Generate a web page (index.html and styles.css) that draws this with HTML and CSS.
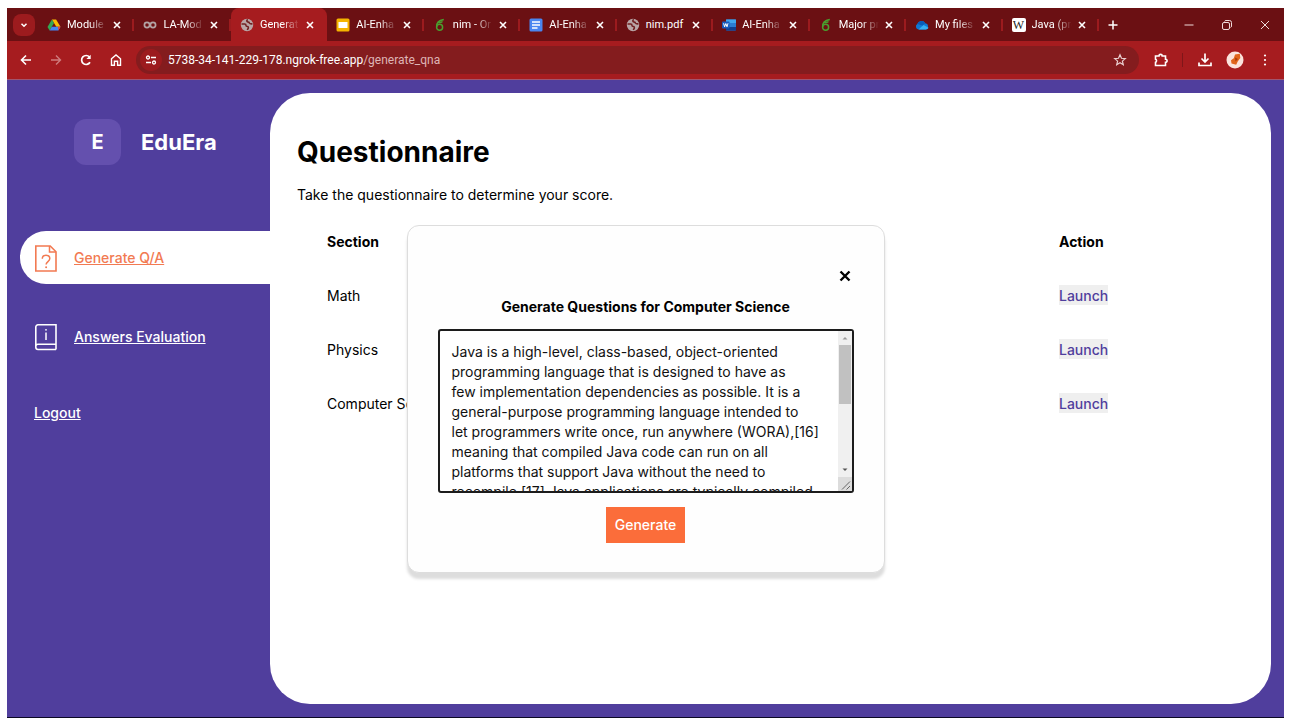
FILE: index.html
```html
<!DOCTYPE html>
<html lang="en">
<head>
<meta charset="utf-8">
<meta name="viewport" content="width=device-width, initial-scale=1">
<title>EduEra – Questionnaire</title>
<link rel="stylesheet" href="styles.css">
</head>
<body>
<svg class="sprite" aria-hidden="true">
  <symbol id="x" viewBox="0 0 10 10"><path d="M2 2l6 6M8 2l-6 6" stroke="currentColor" stroke-width="1.6" fill="none"/></symbol>
  <symbol id="globe" viewBox="0 0 14 14"><circle cx="7" cy="7" r="6.2" fill="#b9a5a6"/><path d="M1.500 6h3.200c1 0 1.300.8 1.300 1.500s.8 1 1.500 1 1 .8.800 1.600L7.300 12M7.800 1.500c-1 .6-1.300 1.500-.6 2.200.7.600 2 .3 2.300 1.300.3.900 1.500 1 3 .8" fill="none" stroke="#702022" stroke-width="1.600"/></symbol>
  <symbol id="overleaf" viewBox="0 0 14 14"><circle cx="6.600" cy="9.300" r="3" fill="none" stroke="#49a02f" stroke-width="1.500"/><path d="M3.600 9C3.300 5.500 5 2.500 10.800 1.500M5.500 4.600c1.800.2 3-.2 4-1.200" fill="none" stroke="#49a02f" stroke-width="1.400"/></symbol>
</svg>
<div class="browser">
  <header class="tabbar">
    <button class="tabsearch" aria-label="Search tabs"><svg viewBox="0 0 10 10" width="10" height="10"><path d="M2.500 3.800L5 6.300l2.500-2.500" stroke="#fff" stroke-width="1.500" fill="none"/></svg></button>
    <nav class="tabs" aria-label="Tabs">
      <div class="tab"><svg class="fav" viewBox="0 0 14 14"><path d="M4.900 1.500h4.200l4.400 7.300H9.300z" fill="#fbbc04"/><path d="M4.900 1.500L.5 8.900l2.100 3.600L7 5z" fill="#34a853"/><path d="M4.800 8.800h8.700l-2.100 3.700H2.600z" fill="#4285f4"/><path d="M11 8.800h2.500l-2.100 3.700z" fill="#ea4335"/></svg><span class="tabname">Module</span><button class="close" aria-label="Close tab"><svg><use href="#x"/></svg></button></div>
      <div class="tab before"><svg class="fav" viewBox="0 0 14 14"><circle cx="4" cy="7" r="2.600" fill="none" stroke="#b3a3a4" stroke-width="1.700"/><circle cx="10" cy="7" r="2.600" fill="none" stroke="#b3a3a4" stroke-width="1.700"/></svg><span class="tabname">LA-Mod</span><button class="close" aria-label="Close tab"><svg><use href="#x"/></svg></button></div>
      <div class="tab active"><svg class="fav"><use href="#globe"/></svg><span class="tabname">Generat</span><button class="close" aria-label="Close tab"><svg><use href="#x"/></svg></button></div>
      <div class="tab"><svg class="fav" viewBox="0 0 14 14"><rect x=".5" y=".5" width="13" height="13" rx="1.500" fill="#f5b400"/><rect x="2.500" y="4" width="9" height="6" fill="#fff"/></svg><span class="tabname">AI-Enha</span><button class="close" aria-label="Close tab"><svg><use href="#x"/></svg></button></div>
      <div class="tab"><svg class="fav"><use href="#overleaf"/></svg><span class="tabname">nim - Or</span><button class="close" aria-label="Close tab"><svg><use href="#x"/></svg></button></div>
      <div class="tab"><svg class="fav" viewBox="0 0 14 14"><rect x=".5" y=".5" width="13" height="13" rx="1.500" fill="#4a86f0"/><path d="M3 4h8M3 7h8M3 10h5.500" stroke="#fff" stroke-width="1.500"/></svg><span class="tabname">AI-Enha</span><button class="close" aria-label="Close tab"><svg><use href="#x"/></svg></button></div>
      <div class="tab"><svg class="fav"><use href="#globe"/></svg><span class="tabname whole">nim.pdf</span><button class="close" aria-label="Close tab"><svg><use href="#x"/></svg></button></div>
      <div class="tab"><svg class="fav" viewBox="0 0 14 14"><rect x="4" y="1.500" width="10" height="11" rx="1" fill="#2b7cd3"/><rect x="4" y="1.500" width="10" height="3.500" fill="#41a5ee"/><rect x="4" y="9" width="10" height="3.500" fill="#103f91"/><rect x="0" y="3.500" width="7.500" height="7" rx="1" fill="#185abd"/><path d="M1.600 5.300l1 3.500 1.200-3.300L5 8.800l1-3.500" stroke="#fff" fill="none"/></svg><span class="tabname">AI-Enha</span><button class="close" aria-label="Close tab"><svg><use href="#x"/></svg></button></div>
      <div class="tab"><svg class="fav"><use href="#overleaf"/></svg><span class="tabname">Major pr</span><button class="close" aria-label="Close tab"><svg><use href="#x"/></svg></button></div>
      <div class="tab"><svg class="fav" viewBox="0 0 14 14"><path d="M3.500 11.500A3 3 0 0 1 2.300 6 4.300 4.300 0 0 1 10.300 5.300a3.200 3.200 0 0 1 .7 6.200z" fill="#0f78d4"/><path d="M3.500 11.500h7.500a3 3 0 0 0 2.600-1.800L8.500 7z" fill="#36b0f2"/><path d="M2.300 6A4.300 4.300 0 0 1 10.300 5.300L7.500 7.500z" fill="#0a5cb8"/></svg><span class="tabname">My files</span><button class="close" aria-label="Close tab"><svg><use href="#x"/></svg></button></div>
      <div class="tab"><span class="fav wiki">W</span><span class="tabname">Java (prc</span><button class="close" aria-label="Close tab"><svg><use href="#x"/></svg></button></div>
    </nav>
    <div class="wincontrols">
      <button class="newtab" aria-label="New tab"><svg viewBox="0 0 12 12" width="12" height="12"><path d="M6 1.500v9M1.500 6h9" stroke="#fff" stroke-width="1.500"/></svg></button>
      <button aria-label="Minimize"><svg viewBox="0 0 12 12" width="12" height="12"><path d="M1.500 6h9" stroke="#f0dada"/></svg></button>
      <button aria-label="Restore"><svg viewBox="0 0 12 12" width="12" height="12"><rect x="1.500" y="3.500" width="7" height="7" rx="1.500" fill="none" stroke="#f0dada"/><path d="M3.500 2.500q.3-1 1.500-1h3.500a2 2 0 0 1 2 2V7q0 1.200-1 1.500" fill="none" stroke="#f0dada"/></svg></button>
      <button aria-label="Close"><svg viewBox="0 0 12 12" width="12" height="12"><path d="M2 2l8 8M10 2l-8 8" stroke="#f0dada"/></svg></button>
    </div>
  </header>
  <div class="toolbar">
    <button aria-label="Back"><svg viewBox="0 0 14 14"><path d="M12 7H3M7 2.500L2.500 7 7 11.500" fill="none" stroke="#fff" stroke-width="1.600"/></svg></button>
    <button aria-label="Forward"><svg viewBox="0 0 14 14"><path d="M2 7h9M7 2.500L11.500 7 7 11.500" fill="none" stroke="#cf7c7e" stroke-width="1.400"/></svg></button>
    <button aria-label="Reload"><svg viewBox="0 0 14 14"><path d="M11 9.300A4.500 4.500 0 1 1 10.500 4" fill="none" stroke="#fff" stroke-width="1.700"/><path d="M11.700 1.700v4.300H7.400z" fill="#fff"/></svg></button>
    <button aria-label="Home"><svg viewBox="0 0 14 14"><path d="M2.500 5.800L7 2l4.500 3.800v6.400H8.600V8.200H5.400v4H2.500z" fill="none" stroke="#fff" stroke-width="1.400"/></svg></button>
    <div class="address">
      <button class="siteinfo" aria-label="Site information"><svg viewBox="0 0 14 14"><circle cx="4" cy="4.500" r="1.500" fill="none" stroke="#fff" stroke-width="1.300"/><path d="M7 4.500h5M2 9.500h5" stroke="#fff" stroke-width="1.400"/><circle cx="10" cy="9.500" r="1.500" fill="none" stroke="#fff" stroke-width="1.300"/></svg></button>
      <span class="url">5738-34-141-229-178.ngrok-free.app<span class="path">/generate_qna</span></span>
      <button class="star" aria-label="Bookmark this page"><svg viewBox="0 0 14 14"><path d="M7 1.800l1.500 3.500 3.800.3-2.900 2.500.9 3.700L7 9.800l-3.300 2 .9-3.700-2.900-2.500 3.800-.3z" fill="none" stroke="#ead0d0" stroke-width="1.200"/></svg></button>
    </div>
    <div class="tools">
      <button aria-label="Extensions"><svg viewBox="0 0 16 16"><path d="M2.500 4H6a1.600 1.600 0 0 1 3.200 0h3.300v3.200a1.600 1.600 0 0 1 0 3.200v3.100h-10v-3.300a1.600 1.600 0 0 0 0-3z" fill="none" stroke="#fff" stroke-width="1.600"/></svg></button>
      <span class="divider"></span>
      <button aria-label="Downloads"><svg viewBox="0 0 16 16"><path d="M8 1.500v8M4.500 6.500L8 10l3.500-3.500M2 10.500v3h12v-3" fill="none" stroke="#fff" stroke-width="1.700"/></svg></button>
      <button aria-label="Profile"><svg class="avatar" viewBox="0 0 18 18"><circle cx="9" cy="9" r="8.500" fill="#fbe3dc"/><path d="M9 3.500l4.800-.8L14.300 7l-2.600 3.500-1.500 3.300-4.700-1.300-.5-3.200 2.800-2z" fill="#e0641b"/><path d="M9 6.500l3 1.500-2.500 2.500z" fill="#a83a0c"/></svg></button>
      <button aria-label="Menu"><svg viewBox="0 0 16 16"><g fill="#fff"><circle cx="8" cy="3.500" r="1.100"/><circle cx="8" cy="8" r="1.100"/><circle cx="8" cy="12.500" r="1.100"/></g></svg></button>
    </div>
  </div>
  <div class="app">
    <aside class="sidebar">
      <div class="brand"><span class="mark">E</span><span class="name">EduEra</span></div>
      <nav class="menu" aria-label="Main">
        <a class="item current" href="#generate"><svg viewBox="0 0 24 28"><path d="M1.800 2h14.400l5.800 5.800V27H1.800z" fill="none" stroke="currentColor" stroke-width="1.600"/><path d="M15.500 2v6H22" fill="none" stroke="currentColor" stroke-width="1.500"/><path d="M8.300 14.800c0-2.300 1.500-3.600 3.700-3.600s3.800 1.300 3.800 3.400c0 3-3.700 3-3.700 6" fill="none" stroke="currentColor" stroke-width="1.500"/><circle cx="12.100" cy="23.300" r="1" fill="currentColor"/></svg><span>Generate Q/A</span></a>
        <a class="item" href="#answers"><svg viewBox="0 0 24 28"><path d="M22 26.500H4a2.200 2.200 0 0 1-2.200-2.200V4A2.200 2.200 0 0 1 4 1.800h18v24.700M1.800 23A2.200 2.200 0 0 1 4 21.200h18" fill="none" stroke="currentColor" stroke-width="1.600"/><path d="M12 9.500v7.500" stroke="currentColor" stroke-width="1.500"/><circle cx="12" cy="6.800" r=".9" fill="currentColor"/></svg><span>Answers Evaluation</span></a>
        <a class="item logout" href="#logout">Logout</a>
      </nav>
    </aside>
    <main class="content">
      <h1>Questionnaire</h1>
      <p class="lead">Take the questionnaire to determine your score.</p>
      <table class="sections">
        <thead><tr><th scope="col">Section</th><th scope="col" class="action">Action</th></tr></thead>
        <tbody>
          <tr><td>Math</td><td><button class="launch">Launch</button></td></tr>
          <tr><td>Physics</td><td><button class="launch">Launch</button></td></tr>
          <tr><td>Computer Science</td><td><button class="launch">Launch</button></td></tr>
        </tbody>
      </table>
    </main>
    <div class="overlay">
      <section class="modal" role="dialog" aria-labelledby="modal-title">
        <button class="dismiss" aria-label="Close dialog"><svg viewBox="0 0 12 12"><path d="M1.500 1.500l9 9M10.500 1.500l-9 9" stroke="#000" stroke-width="2.400"/></svg></button>
        <label class="title" id="modal-title" for="source">Generate Questions for Computer Science</label>
        <div class="editor">
          <textarea id="source">Java is a high-level, class-based, object-oriented
programming language that is designed to have as
few implementation dependencies as possible. It is a
general-purpose programming language intended to
let programmers write once, run anywhere (WORA),[16]
meaning that compiled Java code can run on all
platforms that support Java without the need to
recompile.[17] Java applications are typically compiled</textarea>
          <div class="scrollbar" aria-hidden="true">
            <svg viewBox="0 0 14 14"><path d="M4.500 8.500L7 6l2.500 2.500z" fill="#999"/></svg>
            <div class="track"><div class="thumb"></div></div>
            <svg viewBox="0 0 14 14"><path d="M4.500 5.500h5L7 8z" fill="#555"/></svg>
            <svg class="grip" viewBox="0 0 14 14"><path d="M4 12.500l8-8M8.500 12.500l3.500-3.500" stroke="#666"/></svg>
          </div>
        </div>
        <button class="generate">Generate</button>
      </section>
    </div>
  </div>
</div>
</body>
</html>
```
FILE: styles.css
```css
* { box-sizing: border-box; }
body {
  margin: 0;
  padding: 8px 12px 7px 7px;
  min-height: 100vh;
  display: flex;
  background: #fff;
  font-family: Inter, "Open Sans", sans-serif;
  font-size: 14px;
  color: #000;
}
button { margin: 0; padding: 0; border: 0; background: none; font: inherit; color: inherit; }
.sprite { position: absolute; width: 0; height: 0; }
.browser { flex: 1; min-width: 0; display: flex; flex-direction: column; border-bottom: 1px solid #0b0824; }

/* browser tab strip */
.tabbar {
  display: flex;
  height: 33px;
  background: #6b1013;
  color: #fff;
  font-family: Roboto, "Open Sans", sans-serif;
  font-size: 11px;
}
.tabbar button, .toolbar button { display: grid; place-items: center; flex: none; }
.tabbar .tabsearch { width: 22px; height: 22px; margin: 6px 3px 0 6px; border-radius: 8px; background: #9c1b1e; }
.tabs { flex: 1; min-width: 0; display: grid; grid-template-columns: repeat(11, minmax(0, 1fr)); }
.tab { position: relative; display: flex; align-items: center; padding: 0 10px 0 9px; }
.tab::after { content: ""; position: absolute; right: 0; top: 11px; width: 2px; height: 12px; background: #9c1b1e; }
.tab.active { background: #a61c1f; border-radius: 8px 8px 0 0; }
.tab.active::after { display: none; }
.fav { width: 14px; height: 14px; flex: none; }
.wiki { background: #fff; border-radius: 2px; color: #222; font: 12px/14px "Liberation Serif", serif; text-align: center; }
.tabname {
  flex: 1;
  min-width: 0;
  margin-left: 6px;
  white-space: nowrap;
  -webkit-mask-image: linear-gradient(90deg, #000 55%, transparent 100%);
  mask-image: linear-gradient(90deg, #000 55%, transparent 100%);
}
.tabname.whole { -webkit-mask-image: none; mask-image: none; }
.tab .close { width: 10px; height: 10px; margin-left: 5px; margin-right: 2px; }
.close svg { width: 10px; height: 10px; }
.wincontrols { width: 185px; display: flex; justify-content: flex-end; align-items: center; }
.wincontrols button { width: 38px; height: 30px; }
.wincontrols .newtab { width: 28px; margin-right: auto; }

/* browser toolbar */
.toolbar {
  display: flex;
  align-items: center;
  height: 39px;
  padding: 0 4px;
  background: #a61c1f;
  border-bottom: 1px solid #a0566f;
}
.toolbar > button { width: 30px; height: 30px; }
.toolbar svg { width: 14px; height: 14px; }
.address {
  flex: 1;
  min-width: 0;
  display: flex;
  align-items: center;
  height: 28px;
  margin-left: 5px;
  padding: 0 11px 0 4px;
  border-radius: 14px;
  background: #841c1e;
  color: #fff;
  font: 12px/16px Roboto, "Open Sans", sans-serif;
}
.address .siteinfo { width: 22px; height: 22px; border-radius: 11px; background: #9c1b1e; }
.url { flex: 1; margin-left: 6px; }
.path { color: #dfb5b5; }
.star { width: 16px; height: 16px; }
.tools { display: flex; align-items: center; padding-left: 7px; }
.tools button { width: 30px; height: 30px; }
.tools svg { width: 16px; height: 16px; }
.tools .avatar { width: 18px; height: 18px; }
.divider { width: 1px; height: 14px; margin: 0 7px 0 6px; background: #7f1619; }

/* application */
.app { position: relative; flex: 1; display: flex; background: #503e9d; padding: 13px; }
.sidebar { flex: 0 0 250px; color: #fff; }
.brand { display: flex; align-items: center; gap: 20px; padding: 26px 0 0 54px; font-weight: 700; }
.mark { display: grid; place-items: center; width: 47px; height: 46px; border-radius: 12px; background: #6450ae; font-size: 20px; }
.name { font-size: 22px; }
.menu { display: flex; flex-direction: column; gap: 26px; margin-top: 66px; }
.item {
  display: flex;
  align-items: center;
  gap: 16px;
  height: 53px;
  padding-left: 14px;
  border-radius: 26px 0 0 26px;
  color: #fff;
  font-weight: 500;
}
.item svg { width: 24px; height: 28px; }
.item.current { background: #fff; color: #f27a52; }
.item.logout { height: 46px; }
.content { flex: 1; min-width: 0; padding: 40px 27px; border-radius: 40px; background: #fff; }
h1 { margin: 0; font-size: 28px; line-height: 38px; font-weight: 700; }
.lead { margin: 14px 0 0; line-height: 20px; }
.sections { width: 100%; margin-top: 9px; border-collapse: collapse; text-align: left; }
.sections th, .sections td { height: 54px; padding: 0 30px; }
.sections th { font-weight: 700; }
.sections .action { width: 215px; }
.launch { height: 20px; background: #efefef; color: #503e9d; font-weight: 500; }

/* dialog */
.overlay { position: absolute; inset: 0; display: grid; place-items: center; pointer-events: none; }
.modal {
  width: 478px;
  display: flex;
  flex-direction: column;
  align-items: center;
  padding: 42px 30px 29px;
  border: 1px solid #ddd;
  border-radius: 12px;
  background: #fefefe;
  box-shadow: 0 6px 3px #ddd;
  pointer-events: auto;
}
.dismiss { align-self: flex-end; display: flex; padding: 2px 3px; }
.dismiss svg { width: 12px; height: 12px; }
.title { margin-top: 12px; line-height: 22px; font-size: 14px; font-weight: 700; }
.editor {
  display: flex;
  width: 100%;
  height: 164px;
  margin: 11px 0 14px;
  border: 2px solid #1c1c1c;
  border-radius: 3px;
  background: #fff;
}
textarea {
  flex: 1;
  min-width: 0;
  margin: 0;
  padding: 11px 0 0 12px;
  border: 0;
  outline: 0;
  background: none;
  color: #111;
  font: 14px/20px Inter, "Open Sans", sans-serif;
  white-space: pre;
  overflow: hidden;
  resize: none;
}
.scrollbar { display: flex; flex-direction: column; width: 14px; background: #f0f0f0; }
.scrollbar svg { width: 14px; height: 14px; }
.scrollbar .grip { background: #dcdcdc; }
.track { flex: 1; padding: 0 1px; }
.thumb { height: 50%; background: #c1c1c1; }
.generate { height: 36px; padding: 0 9px; background: #fb6d3a; color: #fff; font-weight: 500; }
```
